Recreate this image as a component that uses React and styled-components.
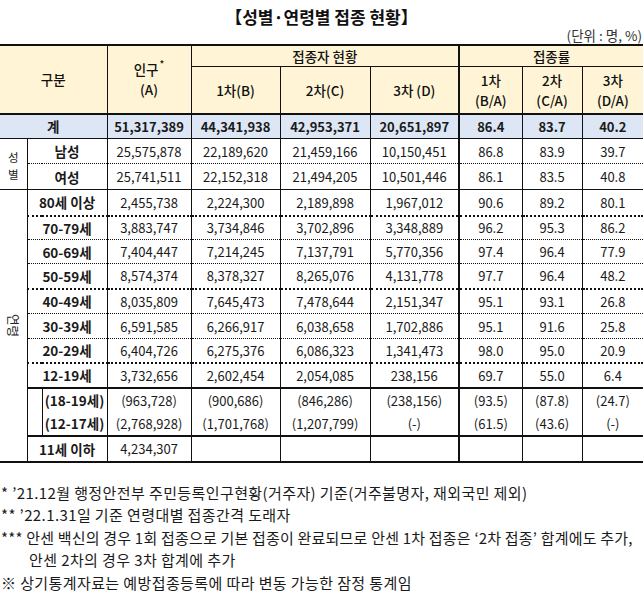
import React from "react";
import styled, { createGlobalStyle, css } from "styled-components";

const GlobalStyle = createGlobalStyle`
  html, body { margin: 0; padding: 0; background: #ffffff; }
  body { font-family: "Noto Sans CJK KR", "Noto Sans", sans-serif; color: #1a1a1a; }
`;

const Page = styled.div`
  width: 643px;
`;

const Title = styled.h1`
  margin: 0;
  padding-top: 7px;
  font-size: 17px;
  line-height: 20px;
  font-weight: 700;
  text-align: center;
  color: #111;
`;

const Unit = styled.div`
  font-size: 13.5px;
  line-height: 17px;
  text-align: right;
  padding-right: 1px;
  color: #333;
`;

const Table = styled.table`
  width: 643px;
  table-layout: fixed;
  border-collapse: collapse;
  border-top: 2px solid #111;
  border-bottom: 2px solid #111;
  font-size: 13px;
`;

const lineStyles = {
  solid: css`border-bottom: 1px solid #111;`,
  thick: css`border-bottom: 2px solid #111;`,
  dotted: css`border-bottom: 1px dotted #111;`,
  bolddotted: css`border-bottom: 2px dotted #111;`,
  none: css`border-bottom: none;`,
};

const Row = styled.tr`
  height: ${(p) => p.$h}px;
  background: ${(p) => p.$bg || "#ffffff"};
`;

const HeadCell = styled.th`
  padding: 0;
  font-weight: 500;
  font-size: 13.5px;
  line-height: 20px;
  text-align: center;
  vertical-align: middle;
  color: #111;
  background: #fff5d6;
  border-left: ${(p) => (p.$noLeft ? "none" : p.$thickLeft ? "2px solid #111" : "1px solid #111")};
  ${(p) => lineStyles[p.$bottom || "solid"]}
`;

const Sup = styled.sup`
  font-size: 10px;
  line-height: 0;
  vertical-align: 7px;
  margin-left: 1px;
`;

const Cell = styled.td`
  padding: 0;
  text-align: center;
  vertical-align: middle;
  white-space: nowrap;
  font-size: ${(p) => (p.$label ? "13.5px" : "13px")};
  font-weight: ${(p) => (p.$bold ? 700 : 400)};
  color: #1a1a1a;
  border-left: ${(p) => (p.$noLeft ? "none" : p.$thickLeft ? "2px solid #111" : "1px solid #111")};
  ${(p) => lineStyles[p.$bottom || "solid"]}
`;

const GroupLabel = styled.td`
  padding: 0;
  text-align: center;
  vertical-align: middle;
  border-left: none;
  border-bottom: 1px solid #111;
  font-size: 11.5px;
  color: #222;
`;

const Stacked = styled.div`
  display: flex;
  flex-direction: column;
  align-items: center;
  line-height: 17px;
  padding-top: 3px;
`;

const Sideways = styled.div`
  writing-mode: vertical-rl;
  text-orientation: sideways;
  margin: 0 auto;
  line-height: 14px;
  font-size: 12.5px;
`;

const Notes = styled.div`
  margin-top: 19px;
  font-size: 15px;
  line-height: 22.5px;
  color: #1a1a1a;
`;

const Note = styled.div`
  white-space: nowrap;
  letter-spacing: ${(p) => (p.$tight ? "0.2px" : "0.4px")};
  padding-left: ${(p) => p.$indent || 1}px;
`;

const COLS = [27, 15, 65, 84, 89, 90, 89, 63, 60, 61];

const ageRows = [
  { label: "80세 이상", v: ["2,455,738", "2,224,300", "2,189,898", "1,967,012", "90.6", "89.2", "80.1"], h: 26, line: "bolddotted" },
  { label: "70-79세", v: ["3,883,747", "3,734,846", "3,702,896", "3,348,889", "96.2", "95.3", "86.2"], h: 24, line: "dotted" },
  { label: "60-69세", v: ["7,404,447", "7,214,245", "7,137,791", "5,770,356", "97.4", "96.4", "77.9"], h: 24, line: "dotted" },
  { label: "50-59세", v: ["8,574,374", "8,378,327", "8,265,076", "4,131,778", "97.7", "96.4", "48.2"], h: 25, line: "bolddotted" },
  { label: "40-49세", v: ["8,035,809", "7,645,473", "7,478,644", "2,151,347", "95.1", "93.1", "26.8"], h: 25, line: "dotted" },
  { label: "30-39세", v: ["6,591,585", "6,266,917", "6,038,658", "1,702,886", "95.1", "91.6", "25.8"], h: 25, line: "dotted" },
  { label: "20-29세", v: ["6,404,726", "6,275,376", "6,086,323", "1,341,473", "98.0", "95.0", "20.9"], h: 24, line: "bolddotted" },
  { label: "12-19세", v: ["3,732,656", "2,602,454", "2,054,085", "238,156", "69.7", "55.0", "6.4"], h: 25, line: "thick" },
];

const subRows = [
  { label: "(18-19세)", v: ["(963,728)", "(900,686)", "(846,286)", "(238,156)", "(93.5)", "(87.8)", "(24.7)"], line: "none" },
  { label: "(12-17세)", v: ["(2,768,928)", "(1,701,768)", "(1,207,799)", "(-)", "(61.5)", "(43.6)", "(-)"], line: "thick" },
];

const sexRows = [
  { label: "남성", v: ["25,575,878", "22,189,620", "21,459,166", "10,150,451", "86.8", "83.9", "39.7"], h: 25, line: "dotted" },
  { label: "여성", v: ["25,741,511", "22,152,318", "21,494,205", "10,501,446", "86.1", "83.5", "40.8"], h: 26, line: "solid" },
];

const Values = ({ v, line, bold }) =>
  v.map((x, i) => (
    <Cell key={i} $bold={bold} $bottom={line} $thickLeft={i === 4}>
      {x}
    </Cell>
  ));

export default function App() {
  return (
    <Page>
      <GlobalStyle />
      <Title>【성별·연령별 접종 현황】</Title>
      <Unit>(단위 : 명, %)</Unit>
      <Table>
        <colgroup>
          {COLS.map((w, i) => (
            <col key={i} style={{ width: w }} />
          ))}
        </colgroup>
        <thead>
          <Row $h={20}>
            <HeadCell colSpan={3} rowSpan={2} $noLeft $bottom="thick">구분</HeadCell>
            <HeadCell rowSpan={2} $bottom="thick">
              인구<Sup>*</Sup>
              <br />
              (A)
            </HeadCell>
            <HeadCell colSpan={3}>접종자 현황</HeadCell>
            <HeadCell colSpan={3} $thickLeft>접종률</HeadCell>
          </Row>
          <Row $h={47}>
            <HeadCell $bottom="thick">1차(B)</HeadCell>
            <HeadCell $bottom="thick">2차(C)</HeadCell>
            <HeadCell $bottom="thick">3차 (D)</HeadCell>
            <HeadCell $bottom="thick" $thickLeft>1차<br />(B/A)</HeadCell>
            <HeadCell $bottom="thick">2차<br />(C/A)</HeadCell>
            <HeadCell $bottom="thick">3차<br />(D/A)</HeadCell>
          </Row>
        </thead>
        <tbody>
          <Row $h={25} $bg="#dce6f4">
            <Cell colSpan={3} $noLeft $bold $label>계</Cell>
            <Values v={["51,317,389", "44,341,938", "42,953,371", "20,651,897", "86.4", "83.7", "40.2"]} line="solid" bold />
          </Row>
          {sexRows.map((r, idx) => (
            <Row key={r.label} $h={r.h}>
              {idx === 0 && (
                <GroupLabel rowSpan={2}>
                  <Stacked>
                    <span>성</span>
                    <span>별</span>
                  </Stacked>
                </GroupLabel>
              )}
              <Cell colSpan={2} $bold $label $bottom={r.line}>{r.label}</Cell>
              <Values v={r.v} line={r.line} />
            </Row>
          ))}
          {ageRows.map((r, idx) => (
            <Row key={r.label} $h={r.h}>
              {idx === 0 && (
                <GroupLabel rowSpan={11}>
                  <Sideways>연령</Sideways>
                </GroupLabel>
              )}
              <Cell colSpan={2} $bold $label $bottom={r.line}>{r.label}</Cell>
              <Values v={r.v} line={r.line} />
            </Row>
          ))}
          {subRows.map((r, idx) => (
            <Row key={r.label} $h={24}>
              {idx === 0 && <Cell rowSpan={2} $bottom="thick" />}
              <Cell $bold $label $bottom={r.line}>{r.label}</Cell>
              <Values v={r.v} line={r.line} />
            </Row>
          ))}
          <Row $h={26}>
            <Cell colSpan={2} $bold $label $bottom="none">11세 이하</Cell>
            <Values v={["4,234,307", "", "", "", "", "", ""]} line="none" />
          </Row>
        </tbody>
      </Table>
      <Notes>
        <Note>* ’21.12월 행정안전부 주민등록인구현황(거주자) 기준(거주불명자, 재외국민 제외)</Note>
        <Note>** ’22.1.31일 기준 연령대별 접종간격 도래자</Note>
        <Note $tight>*** 안센 백신의 경우 1회 접종으로 기본 접종이 완료되므로 안센 1차 접종은 ‘2차 접종’ 합계에도 추가,</Note>
        <Note $indent={29}>안센 2차의 경우 3차 합계에 추가</Note>
        <Note>※ 상기통계자료는 예방접종등록에 따라 변동 가능한 잠정 통계임</Note>
      </Notes>
    </Page>
  );
}
